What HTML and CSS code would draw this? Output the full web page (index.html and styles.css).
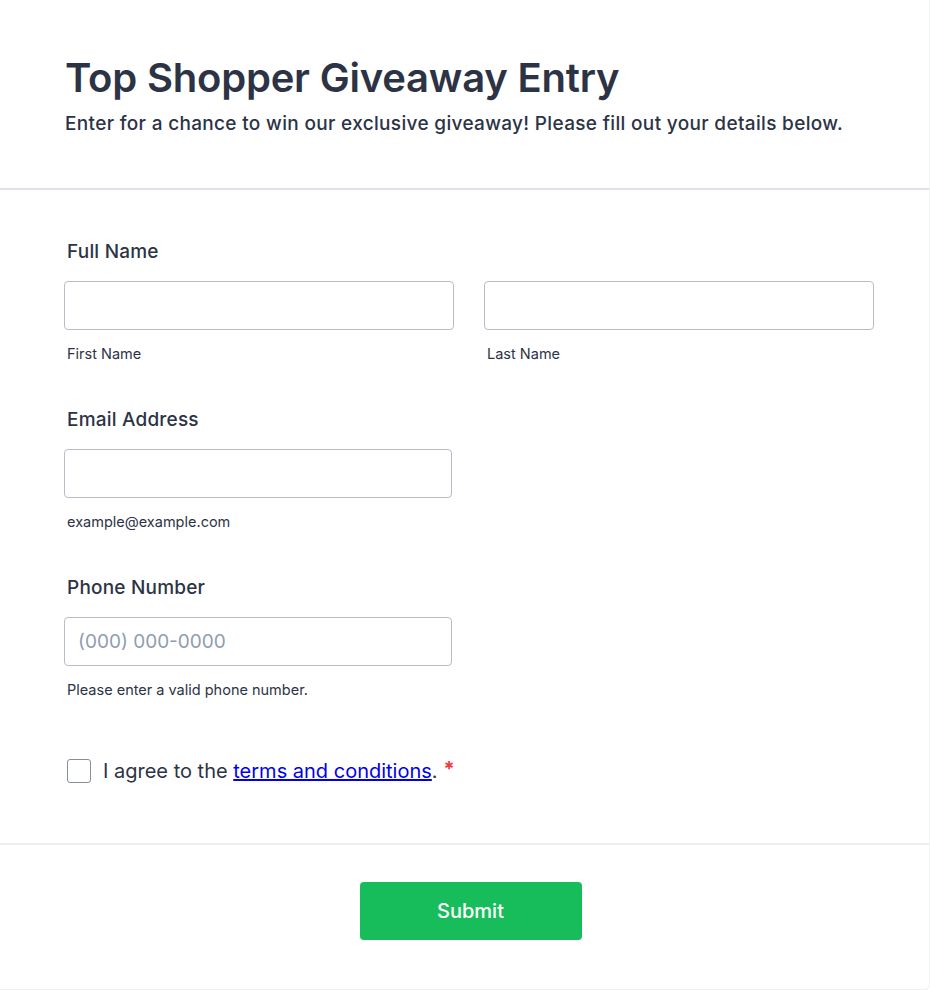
FILE: index.html
```html
<!DOCTYPE html>
<html lang="en">
<head>
    <meta charset="UTF-8">
    <meta name="viewport" content="width=device-width, initial-scale=1.0">
    <title>Top Shopper Giveaway Entry</title>
    <link rel="stylesheet" href="styles.css">
</head>
<body>
    <div class="form-card">
        <div class="form-header">
            <h1>Top Shopper Giveaway Entry</h1>
            <p>Enter for a chance to win our exclusive giveaway! Please fill out your details below.</p>
        </div>

        <form class="form-body" onsubmit="return false">
            <div class="field">
                <label class="field-label">Full Name</label>
                <div class="name-row">
                    <div class="sub-field">
                        <input type="text" id="firstName">
                        <span class="sub-label">First Name</span>
                    </div>
                    <div class="sub-field">
                        <input type="text" id="lastName">
                        <span class="sub-label">Last Name</span>
                    </div>
                </div>
            </div>

            <div class="field">
                <label class="field-label" for="email">Email Address</label>
                <div class="sub-field half">
                    <input type="email" id="email">
                    <span class="sub-label">example@example.com</span>
                </div>
            </div>

            <div class="field">
                <label class="field-label" for="phone">Phone Number</label>
                <div class="sub-field half">
                    <input type="tel" id="phone" placeholder="(000) 000-0000">
                    <span class="sub-label">Please enter a valid phone number.</span>
                </div>
            </div>

            <div class="agree-row">
                <input type="checkbox" id="agree" class="agree-box">
                <label for="agree">I agree to the <a href="#">terms and conditions</a>.</label>
                <span class="required">*</span>
            </div>
        </form>

        <div class="form-footer">
            <button class="submit-btn" type="button">Submit</button>
        </div>
    </div>
</body>
</html>
```

FILE: styles.css
```css
body {
    margin: 0;
    background-color: #ffffff;
    font-family: Inter, "Noto Sans", Arial, sans-serif;
    color: #2c3345;
}
.form-card {
    width: 930px;
    height: 990px;
    box-sizing: border-box;
    border-right: 1px solid #f1f1f8;
    border-bottom: 1px solid #f1f1f8;
    border-radius: 0 0 6px 0;
    background-color: #ffffff;
}
.form-header {
    padding: 54px 64px 50px 65px;
    border-bottom: 2px solid #dfe0ee;
}
.form-header h1 {
    margin: 0;
    font-size: 40px;
    font-weight: 600;
    line-height: 1.2;
    letter-spacing: -0.2px;
}
.form-header p {
    margin: 9px 0 0;
    font-size: 19px;
    font-weight: 500;
    line-height: 1.4;
    letter-spacing: 0.33px;
}
.form-body {
    padding: 51px 55px 60px 64px;
    border-bottom: 2px solid #eceef4;
}
.field {
    margin-bottom: 47px;
}
.field-label {
    display: block;
    margin: 0 0 18px 3px;
    font-size: 19px;
    font-weight: 500;
    line-height: 22px;
    letter-spacing: 0.2px;
}
.name-row {
    display: flex;
    gap: 30px;
}
.sub-field {
    display: flex;
    flex-direction: column;
    flex: 1;
}
.sub-field.half {
    width: 388px;
}
input[type="text"], input[type="email"], input[type="tel"] {
    height: 49px;
    box-sizing: border-box;
    padding: 0 13px;
    border: 1px solid #b8bdc9;
    border-radius: 4px;
    font-family: inherit;
    font-size: 19px;
    color: #2c3345;
    background-color: #ffffff;
}
input::placeholder {
    color: #8f9cb2;
}
.sub-label {
    margin: 15px 0 0 3px;
    font-size: 14.5px;
    line-height: 17px;
    color: #2c3345;
}
.agree-row {
    display: flex;
    align-items: center;
    margin-top: 61px;
    padding-left: 3px;
    font-size: 20px;
    line-height: 24px;
}
.agree-box {
    appearance: none;
    width: 24px;
    height: 24px;
    margin: 0 12px 0 0;
    border: 1px solid #868d9b;
    border-radius: 3px;
    background-color: #ffffff;
}
.agree-row a {
    color: #0000ee;
}
.required {
    align-self: flex-start;
    margin-left: 6px;
    margin-top: -2px;
    font-weight: 700;
    font-size: 20px;
    color: #f23a3c;
}
.form-footer {
    display: flex;
    justify-content: center;
    padding-top: 37px;
}
.submit-btn {
    width: 222px;
    height: 58px;
    margin-left: 12px;
    border: none;
    border-radius: 4px;
    background-color: #18bd5b;
    color: #ffffff;
    font-family: inherit;
    font-size: 20px;
    font-weight: 500;
    cursor: pointer;
}
```
